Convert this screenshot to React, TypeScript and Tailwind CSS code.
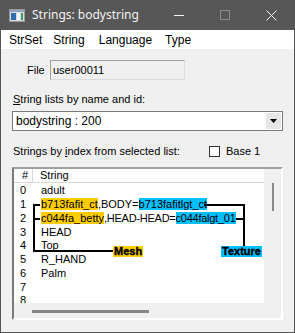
const font = { fontFamily: '"Liberation Sans", Arial, sans-serif' };

const rows: { n: string; s: React.ReactNode }[] = [
  { n: "0", s: "adult" },
  {
    n: "1",
    s: (
      <>
        <span className="bg-[#ffcc00]">b713fafit_ct</span>,BODY=
        <span className="bg-[#00bfff]">b713fafitlgt_ct</span>
      </>
    ),
  },
  {
    n: "2",
    s: (
      <>
        <span className="bg-[#ffcc00]">c044fa_betty</span>
        <span className="tracking-[-0.25px]">
          ,HEAD-HEAD=<span className="bg-[#00bfff]">c044falgt_01</span>
        </span>
      </>
    ),
  },
  { n: "3", s: "HEAD" },
  { n: "4", s: "Top" },
  { n: "5", s: "R_HAND" },
  { n: "6", s: "Palm" },
  { n: "7", s: "" },
  { n: "8", s: "" },
];

function AppIcon() {
  return (
    <svg width="16" height="13" viewBox="0 0 16 13">
      <rect x="0.5" y="0.5" width="15" height="12" fill="#d8d8d8" stroke="#9a9a9a" />
      <rect x="1" y="1" width="14" height="2" fill="#8fa6c8" />
      <rect x="2" y="4" width="5" height="7" fill="#2f6fae" />
      <rect x="8" y="4" width="3" height="7" fill="#ffffff" />
      <rect x="12" y="4" width="2" height="7" fill="#3aa05a" />
    </svg>
  );
}

export default function App() {
  return (
    <div
      className="relative w-[295px] h-[333px] overflow-hidden bg-[#f0f0f0] border border-t-0 border-[#555555] text-[11px] text-black"
      style={font}
    >
      {/* Title bar */}
      <div className="flex h-[30px] items-center bg-[#575757] text-[#f2f2f2]">
        <div className="ml-[8px] mr-[7px] flex items-center">
          <AppIcon />
        </div>
        <span className="text-[12px]" style={{ fontFamily: '"Noto Sans", "Liberation Sans", sans-serif' }}>
          Strings: bodystring
        </span>
        <div className="ml-auto flex h-full items-center">
          <div className="flex w-[46px] justify-center">
            <div className="h-px w-[10px] bg-[#f2f2f2]" />
          </div>
          <div className="flex w-[46px] justify-center">
            <div className="h-[10px] w-[10px] border border-[#8a8a8a]" />
          </div>
          <div className="flex w-[46px] justify-center">
            <svg width="11" height="11" viewBox="0 0 11 11">
              <path d="M0.5 0.5 L10.5 10.5 M10.5 0.5 L0.5 10.5" stroke="#f2f2f2" strokeWidth="1" />
            </svg>
          </div>
        </div>
      </div>

      {/* Menu bar */}
      <div className="flex h-[19px] items-center bg-white text-[12px]">
        <span className="ml-[8px]">StrSet</span>
        <span className="ml-[11px]">String</span>
        <span className="ml-[14px]">Language</span>
        <span className="ml-[13px]">Type</span>
      </div>

      {/* File */}
      <div className="mt-[11px] flex items-center">
        <span className="ml-[26px] w-[23px]">File</span>
        <div className="flex h-[20px] w-[135px] items-center border border-[#a0a0a0] border-r-[#dcdcdc] border-b-[#dcdcdc] bg-[#f0f0f0] pl-[2px]">
          user00011
        </div>
      </div>

      <div className="ml-[12px] mt-[13px] leading-[13px]">
        <span className="underline">S</span>tring lists by name and id:
      </div>

      {/* Combo */}
      <div className="mx-[11px] mt-[5px] flex h-[20px] items-center border border-[#7a7a7a] bg-white">
        <span className="ml-[3px] text-[12px]">bodystring : 200</span>
        <div className="ml-auto mr-[1px] flex h-[16px] w-[15px] items-center justify-center bg-[#e6e6e6]">
          <svg width="7" height="4" viewBox="0 0 7 4">
            <path d="M0 0 H7 L3.5 4 Z" fill="#000" />
          </svg>
        </div>
      </div>

      <div className="mt-[14px] flex items-center leading-[13px]">
        <span className="ml-[12px]">
          Strings by <span className="underline">i</span>ndex from selected list:
        </span>
        <div className="ml-[29px] h-[11px] w-[11px] border border-[#333333] bg-white" />
        <span className="ml-[6px]">Base 1</span>
      </div>

      {/* List */}
      <div className="relative mx-[11px] mt-[9px] flex h-[153px] flex-col border-2 border-t-[#a0a0a0] border-l-[#7a7a7a] border-b-white border-r-white">
        <div className="flex h-[134px] shrink-0">
          <div className="min-w-0 flex-1 overflow-hidden bg-white">
            <div className="flex h-[14px] border-b border-[#d8d8d8] leading-[13px]">
              <div className="w-[19px] border-r border-[#d8d8d8] pl-[8px]">#</div>
              <div className="pl-[7px]">String</div>
            </div>
            <div className="pt-[1px]">
              {rows.map((r) => (
                <div key={r.n} className="flex h-[13.75px] items-center whitespace-nowrap leading-[13px]">
                  <span className="w-[27px] shrink-0 pl-[6px]">{r.n}</span>
                  <span>{r.s}</span>
                </div>
              ))}
            </div>
          </div>
          <div className="relative w-[17px] shrink-0 bg-[#f0f0f0]">
            <div className="absolute left-[8px] top-[14px] h-[28px] w-[2px] bg-[#8a8a8a]" />
          </div>
        </div>
        <div className="flex h-[15px] shrink-0 bg-[#f0f0f0]">
          <div className="ml-[18px] mt-[7px] h-[3px] w-[117px] bg-[#858585]" />
        </div>

        {/* Annotations */}
        <div className="absolute left-[19px] top-[35px] h-[48px] w-[2px] bg-black" />
        <div className="absolute left-[19px] top-[35px] h-[2px] w-[7px] bg-black" />
        <div className="absolute left-[19px] top-[49px] h-[2px] w-[7px] bg-black" />
        <div className="absolute left-[19px] top-[81px] h-[2px] w-[82px] bg-black" />
        <div className="absolute left-[99px] top-[77px] bg-[#ffcc00] px-[1px] text-[11px] font-bold leading-[11px] [-webkit-text-stroke:0.4px_black]">
          Mesh
        </div>

        <div className="absolute left-[190px] top-[35px] h-[2px] w-[41px] bg-black" />
        <div className="absolute left-[222px] top-[49px] h-[2px] w-[9px] bg-black" />
        <div className="absolute left-[229px] top-[35px] h-[42px] w-[2px] bg-black" />
        <div className="absolute left-[207px] top-[77px] bg-[#00bfff] px-[1px] text-[11px] font-bold leading-[11px] [-webkit-text-stroke:0.4px_black]">
          Texture
        </div>
      </div>
    </div>
  );
}
